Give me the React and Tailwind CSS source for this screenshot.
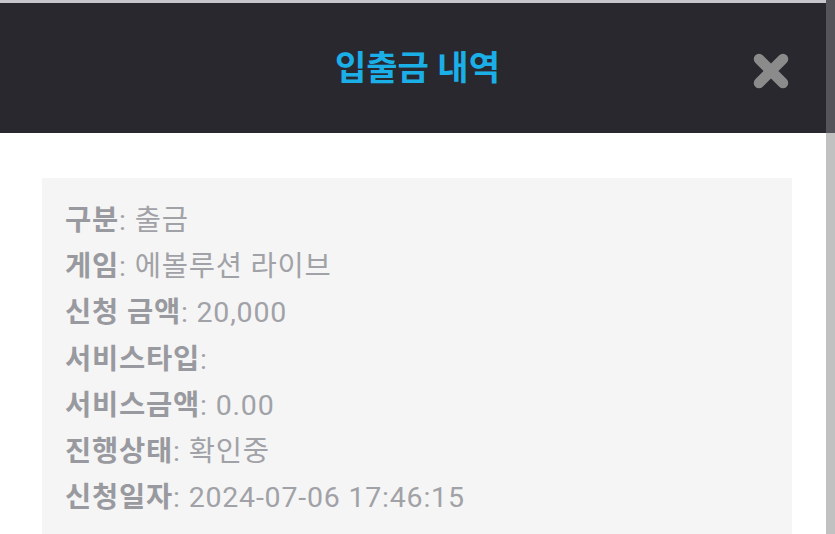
import React from "react";

const rows = [
  { label: "구분", value: "출금" },
  { label: "게임", value: "에볼루션 라이브" },
  { label: "신청 금액", value: "20,000" },
  { label: "서비스타입", value: "" },
  { label: "서비스금액", value: "0.00" },
  { label: "진행상태", value: "확인중" },
  { label: "신청일자", value: "2024-07-06 17:46:15" },
];

const CloseIcon = () => (
  <svg width="40" height="40" viewBox="0 0 40 40">
    <path d="M8 8 L32 32 M32 8 L8 32" stroke="#8b8b8b" strokeWidth="10.5" strokeLinecap="round" />
  </svg>
);

export default function App() {
  return (
    <div
      className="w-[835px] h-[534px] overflow-hidden flex bg-white"
      style={{ fontFamily: "Roboto, 'Noto Sans CJK KR', sans-serif" }}
    >
      <div className="flex-1 flex flex-col">
        <div className="h-[3px] bg-[#c6c6cc]" />
        <div className="h-[130px] bg-[#29282f] flex items-center justify-end relative">
          <h1 className="absolute left-0 right-[-9px] text-center text-[34px] font-bold text-[#1aafe6] leading-none">
            입출금 내역
          </h1>
          <button className="mr-[35px] mt-[6px] relative">
            <CloseIcon />
          </button>
        </div>
        <div className="pt-[45px] px-[42px] pr-[34px] flex-1">
          <div className="bg-[#f5f5f5] h-full pl-[23px] pt-[20px]">
            {rows.map((r) => (
              <div
                key={r.label}
                className="text-[28.5px] leading-[46.2px] tracking-[0.8px] text-[#a1a2a7] whitespace-nowrap"
              >
                <span className="font-bold text-[#999a9f]">{r.label}</span>: {r.value}
              </div>
            ))}
          </div>
        </div>
      </div>
      <div className="w-[9px] flex flex-col">
        <div className="h-[133px] bg-[#55545a]" />
        <div className="flex-1 bg-[#c1c1c1]" />
      </div>
    </div>
  );
}
